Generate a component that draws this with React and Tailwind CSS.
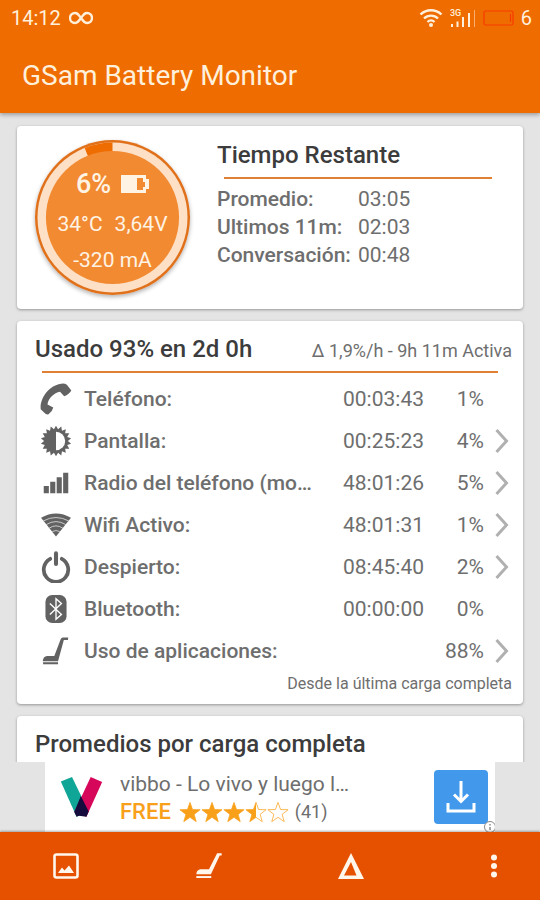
import React from "react";

const dientes = Array.from({ length: 36 }, (_, i) => {
  const r = i % 2 === 0 ? 45 : 35;
  const a = (i * Math.PI) / 18;
  return `${50 + r * Math.sin(a)},${50 - r * Math.cos(a)}`;
}).join(" ");

function PhoneIcon() {
  return (
    <svg viewBox="92 185 94 94" className="w-8 h-8" fill="currentColor">
      <path d="M94 262 C91 230 118 194 150 188 Q162 184 171 190 L184 207 Q178 218 163 224 L151 211 C133 214 116 231 114 248 L131 257 Q129 268 117 277 Q112 278 108 275Z" />
    </svg>
  );
}

function ScreenIcon() {
  return (
    <svg viewBox="3 3 94 94" className="w-8 h-8" fill="currentColor">
      <polygon points={dientes} />
      <path d="M50 23 A27 27 0 0 1 50 77Z" fill="white" />
    </svg>
  );
}

function SignalIcon() {
  return (
    <svg viewBox="91 445 94 94" className="w-8 h-8" fill="currentColor">
      <path d="M102 501h15v21h-15z M121 488h15v34h-15z M140 475h15v47h-15z M159 462h15v60h-15z" />
    </svg>
  );
}

function WifiIcon() {
  return (
    <svg viewBox="92 25 94 94" className="w-8 h-8">
      <path d="M139 106 L95 51 Q139 26 183 51Z" fill="currentColor" />
      <g fill="none" stroke="#dcdcdc" strokeWidth="2.500">
        <path d="M102 60 Q139 40 176 60" />
        <path d="M110 71 Q139 53 168 71" />
        <path d="M118 82 Q139 67 160 82" />
        <path d="M127 93 Q139 84 151 93" />
      </g>
    </svg>
  );
}

function PowerIcon() {
  return (
    <svg
      viewBox="91 147 94 94"
      className="w-8 h-8"
      fill="none"
      stroke="currentColor"
      strokeLinecap="round"
    >
      <path d="M121 170 A36 36 0 1 0 155 170" strokeWidth="11" />
      <path d="M138 154v31" strokeWidth="12" />
    </svg>
  );
}

function BluetoothIcon() {
  return (
    <svg viewBox="92 278 94 94" className="w-8 h-8">
      <rect x="108" y="284" width="62" height="82" rx="20" fill="currentColor" />
      <path
        d="M121 309 L155 341 L139 355 V295 L155 309 L121 341"
        fill="none"
        stroke="white"
        strokeWidth="4"
      />
    </svg>
  );
}

function VacuumIcon({ className }) {
  return (
    <svg viewBox="587 460 80 80" className={className} fill="currentColor">
      <path d="M666 461 h-14 l-25 49 h-26 q-12 1 -13 15 h45 l27 -57 h6z" />
      <path d="M588 531h46v6h-46z" />
    </svg>
  );
}

function AppsIcon() {
  return (
    <svg viewBox="92 404 94 94" className="w-8 h-8" fill="currentColor">
      <path d="M175 411 h-16 q-4 1 -6 5 L134 466 h-21 q-12 2 -13 15 h45 L162 419 h12z" />
      <path d="M101 484h44v6h-44z" />
    </svg>
  );
}

function Star({ fill }) {
  const d = "M12 1.500l2.800 7.800 8.200.2-6.500 5.100 2.300 7.900L12 17.800l-6.800 4.700 2.300-7.900L1 9.500l8.200-.2z";
  return (
    <svg viewBox="0 0 24 24" className="w-[22px] h-[22px]">
      <path d={d} fill={fill === 1 ? "#f9a01b" : "none"} stroke="#f9a01b" strokeWidth="0.8" />
      {fill === 0.5 && (
        <path d="M12 1.500v16.300l-6.800 4.700 2.300-7.900L1 9.500l8.200-.2z" fill="#f9a01b" />
      )}
    </svg>
  );
}

const tiempos = [
  ["Promedio:", "03:05"],
  ["Ultimos 11m:", "02:03"],
  ["Conversación:", "00:48"],
];

const consumos = [
  { icon: <PhoneIcon />, label: "Teléfono:", time: "00:03:43", pct: "1%" },
  { icon: <ScreenIcon />, label: "Pantalla:", time: "00:25:23", pct: "4%", more: true },
  { icon: <SignalIcon />, label: "Radio del teléfono (mo…", time: "48:01:26", pct: "5%", more: true },
  { icon: <WifiIcon />, label: "Wifi Activo:", time: "48:01:31", pct: "1%", more: true },
  { icon: <PowerIcon />, label: "Despierto:", time: "08:45:40", pct: "2%", more: true },
  { icon: <BluetoothIcon />, label: "Bluetooth:", time: "00:00:00", pct: "0%" },
  { icon: <AppsIcon />, label: "Uso de aplicaciones:", time: "", pct: "88%", more: true },
];

function StatusBar() {
  return (
    <div className="flex items-center justify-between h-9 pl-[11px] pr-2 text-xl">
      <div className="flex items-center gap-2">
        <span>14:12</span>
        <svg viewBox="0 0 24 14" className="w-6 h-3.5" fill="none" stroke="currentColor" strokeWidth="2.400">
          <path d="M12 7C9.500 3.500 8.500 2 6 2a5 5 0 0 0 0 10c2.500 0 3.500-1.500 6-5s3.500-5 6-5a5 5 0 0 1 0 10c-2.500 0-3.500-1.500-6-5z" />
        </svg>
      </div>
      <div className="flex items-center gap-[7px]">
        <svg viewBox="0 0 24 20" className="w-6 h-5" fill="none" stroke="currentColor" strokeWidth="2.400">
          <path d="M1.500 6.500a15 15 0 0 1 21 0 M5 10.500a10 10 0 0 1 14 0 M8.500 14a5 5 0 0 1 7 0" />
          <circle cx="12" cy="17" r="2" fill="currentColor" stroke="none" />
        </svg>
        <svg viewBox="0 0 26 20" className="w-[26px] h-5" fill="currentColor">
          <text x="0" y="8" fontSize="9" fontWeight="500" fontFamily="Roboto, sans-serif">3G</text>
          <path d="M1 16h2v3H1z M6.500 13.500h2V19h-2z M12 9h2v10h-2z M18 5h2v14h-2z" />
          <path d="M24 2h1v17h-1z" opacity="0.5" />
        </svg>
        <svg viewBox="0 0 31 16" className="w-[31px] h-4" fill="none" stroke="#f93a00" strokeWidth="1.200">
          <rect x="1" y="1" width="29" height="14" rx="1.500" />
          <path d="M27.500 4v8" />
        </svg>
        <span>6</span>
      </div>
    </div>
  );
}

function Gauge() {
  return (
    <div className="grid place-items-center w-[155px] h-[155px] shrink-0 rounded-full shadow-[0_2px_4px_rgba(0,0,0,0.3)]">
      <svg viewBox="0 0 156 156" className="col-start-1 row-start-1 w-full h-full">
        <circle cx="78" cy="78" r="78" fill="#e0701a" />
        <circle cx="78" cy="78" r="75.500" fill="#fde0c6" />
        <path d="M78 78 L50 8 A75.500 75.500 0 0 1 78 2.500Z" fill="#ef6c00" />
        <circle cx="78" cy="78" r="67" fill="#f28a32" />
      </svg>
      <div className="col-start-1 row-start-1 flex flex-col items-center pt-2 text-[21px] leading-9 text-[#fff3e4]">
        <div className="flex items-center gap-2.5">
          <span className="text-[27px] font-medium">6%</span>
          <svg viewBox="0 0 28 18" className="w-7 h-[18px]" fill="currentColor">
            <path
              fillRule="evenodd"
              d="M0 0h25v4h3v10h-3v4H0z M16 3v12h6v-3h2V7h-2V3z"
            />
          </svg>
        </div>
        <div className="flex gap-3 pt-1">
          <span>34°C</span>
          <span>3,64V</span>
        </div>
        <span>-320 mA</span>
      </div>
    </div>
  );
}

const card = "bg-white rounded-[4px] shadow-[0_1px_3px_rgba(0,0,0,0.35)]";

function App() {
  return (
    <div className="flex flex-col h-screen overflow-hidden bg-[#e4e4e4] text-[#6e6e6e] font-[Roboto,sans-serif]">
      <header className="z-10 h-[113px] shrink-0 bg-[#ef6c00] text-[#fff0dc] shadow-[0_2px_4px_rgba(0,0,0,0.3)]">
        <StatusBar />
        <h1 className="pl-[22px] pt-5 text-[28px] leading-10">GSam Battery Monitor</h1>
      </header>

      <main className="flex flex-col flex-1 min-h-0 gap-3 px-[17px] pt-[13px] overflow-hidden">
        <section className={`${card} flex shrink-0 h-[183px] pl-[18px] pt-[14px] gap-[27px]`}>
          <Gauge />
          <div className="flex-1">
            <h2 className="pt-px text-2xl leading-7 font-medium text-[#3c3c3c]">Tiempo Restante</h2>
            <div className="h-0.5 mt-2 mb-1.5 ml-[7px] mr-[31px] bg-[#df8035]" />
            <table className="text-[21px] leading-7">
              <tbody>
                {tiempos.map(([label, value]) => (
                  <tr key={label}>
                    <th scope="row" className="w-[141px] text-left font-medium">{label}</th>
                    <td>{value}</td>
                  </tr>
                ))}
              </tbody>
            </table>
          </div>
        </section>

        <section className={`${card} shrink-0 pb-2`}>
          <div className="flex items-center justify-between pl-[18px] pr-[11px] pt-3 pb-1.5">
            <h2 className="text-2xl leading-8 font-medium text-[#3c3c3c]">Usado 93% en 2d 0h</h2>
            <span className="pt-1 text-lg">Δ 1,9%/h - 9h 11m Activa</span>
          </div>
          <div className="h-0.5 ml-[25px] mr-[25px] mb-[5px] bg-[#df8035]" />
          <table className="w-full table-fixed text-[21px] leading-7">
            <colgroup>
              <col className="w-[67px]" />
              <col />
              <col className="w-[106px]" />
              <col className="w-[60px]" />
              <col className="w-[39px]" />
            </colgroup>
            <tbody>
              {consumos.map((c) => (
                <tr key={c.label} className="h-[42px]">
                  <td className="pl-[23px] text-[#626262]">{c.icon}</td>
                  <th scope="row" className="text-left font-medium whitespace-nowrap">{c.label}</th>
                  <td className="text-right">{c.time}</td>
                  <td className="text-right">{c.pct}</td>
                  <td>
                    {c.more && (
                      <button type="button" aria-label={c.label} className="block ml-[11px]">
                        <svg viewBox="0 0 14 26" className="w-3.5 h-[26px]" fill="none" stroke="#b0b0b0" strokeWidth="3">
                          <path d="M1.500 2l10 11-10 11" />
                        </svg>
                      </button>
                    )}
                  </td>
                </tr>
              ))}
            </tbody>
          </table>
          <p className="pr-[11px] text-right text-base leading-6">Desde la última carga completa</p>
        </section>

        <section className={`${card} shrink-0 pl-[18px] pt-3 h-20`}>
          <h2 className="text-2xl leading-8 font-medium text-[#3c3c3c]">Promedios por carga completa</h2>
        </section>
      </main>

      <aside className="shrink-0 h-[70px] bg-[#e4e4e4]">
        <div className="relative flex items-center h-full mx-[45px] pl-[15px] pr-[7px] bg-white">
          <svg viewBox="178 230 130 128" className="w-[43px] h-[42px] shrink-0">
            <path d="M180 247L214 233L265 338L228 354Z" fill="#0fa597" />
            <path d="M271 233L306 248L258 354L221 340Z" fill="#d6075a" />
            <path d="M241 291L265 338L258 354L235 351L228 354L221 340Z" fill="#150b3d" />
          </svg>
          <div className="flex-1 pl-[17px] pt-0.5">
            <div className="text-[21px] leading-7">vibbo - Lo vivo y luego l…</div>
            <div className="flex items-center leading-6">
              <span className="mr-2 text-[22px] font-medium text-[#f9a01b]">FREE</span>
              <Star fill={1} />
              <Star fill={1} />
              <Star fill={1} />
              <Star fill={0.5} />
              <Star fill={0} />
              <span className="ml-1.5 text-lg">(41)</span>
            </div>
          </div>
          <button
            type="button"
            aria-label="Descargar"
            className="grid place-items-center w-[54px] h-[54px] rounded bg-[#4299ec]"
          >
            <svg viewBox="0 0 30 32" className="w-[30px] h-8" fill="none" stroke="white" strokeWidth="3">
              <path d="M15 0v20 M8 13.500l7 7 7-7 M2 22v8h26v-8" />
            </svg>
          </button>
          <svg viewBox="0 0 12 12" className="absolute right-0 bottom-0 w-3 h-3" fill="none" stroke="#8a8a8a">
            <circle cx="7" cy="7" r="5.500" fill="white" />
            <path d="M7 4v1.500 M7 7v3" strokeWidth="1.500" />
          </svg>
        </div>
      </aside>

      <nav className="z-10 flex items-center justify-between shrink-0 h-[68px] pl-11 pr-6 bg-[#e65100] text-[#fff6ec] shadow-[0_-1px_2px_rgba(0,0,0,0.3)]">
        <button type="button" aria-label="Gráficos" className="grid place-items-center w-11 h-11">
          <svg viewBox="0 0 26 26" className="w-[26px] h-[26px]">
            <rect x="1.500" y="1.500" width="23" height="23" rx="2" fill="none" stroke="currentColor" strokeWidth="2.600" />
            <path d="M5 20l4-5.500 2.500 3 4.500-5 5 7.500z" fill="currentColor" />
          </svg>
        </button>
        <button type="button" aria-label="Aplicaciones" className="grid place-items-center w-11 h-11">
          <VacuumIcon className="w-[26px] h-[26px]" />
        </button>
        <button type="button" aria-label="Delta" className="grid place-items-center w-11 h-11">
          <svg viewBox="0 0 26 26" className="w-[26px] h-[26px]" fill="currentColor">
            <path fillRule="evenodd" d="M13 0L26 26H0z M13 9L6 22.500H18.500z" />
          </svg>
        </button>
        <button type="button" aria-label="Más opciones" className="grid place-items-center w-11 h-11">
          <svg viewBox="0 0 8 26" className="w-2 h-[26px]" fill="currentColor">
            <circle cx="4" cy="4.500" r="3" />
            <circle cx="4" cy="13" r="3" />
            <circle cx="4" cy="21.500" r="3" />
          </svg>
        </button>
      </nav>
    </div>
  );
}

export default App;
